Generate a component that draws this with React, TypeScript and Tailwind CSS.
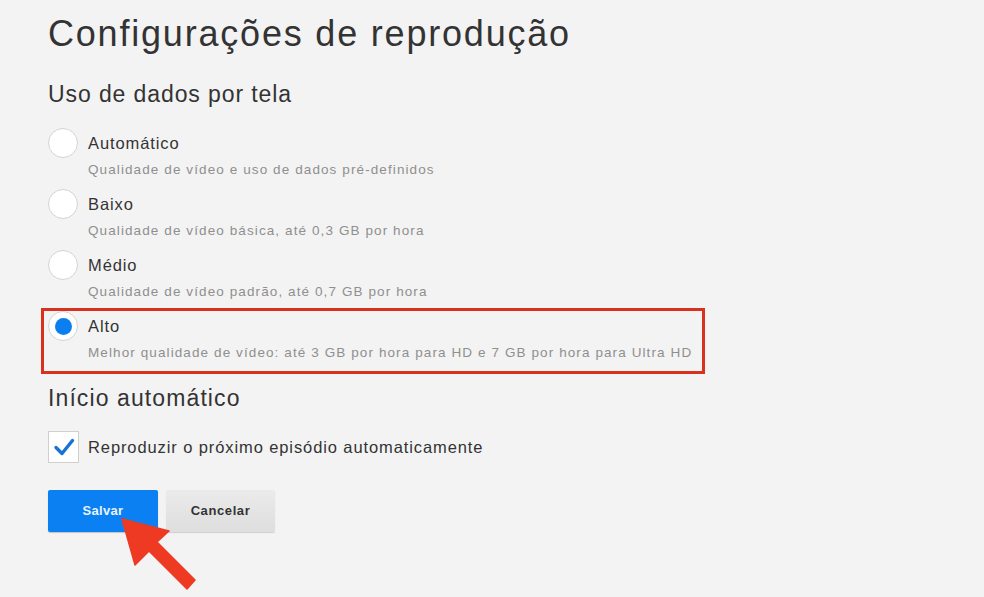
import { useState } from "react";

type Plan = {
  id: string;
  label: string;
  hint: string;
};

const plans: Plan[] = [
  { id: "auto", label: "Automático", hint: "Qualidade de vídeo e uso de dados pré-definidos" },
  { id: "low", label: "Baixo", hint: "Qualidade de vídeo básica, até 0,3 GB por hora" },
  { id: "medium", label: "Médio", hint: "Qualidade de vídeo padrão, até 0,7 GB por hora" },
  {
    id: "high",
    label: "Alto",
    hint: "Melhor qualidade de vídeo: até 3 GB por hora para HD e 7 GB por hora para Ultra HD",
  },
];

function RadioOption({
  plan,
  checked,
  onSelect,
}: {
  plan: Plan;
  checked: boolean;
  onSelect: () => void;
}) {
  return (
    <div className="flex flex-col cursor-pointer" onClick={onSelect}>
      <div className="flex items-center h-[30px]">
        <span className="w-[30px] h-[30px] rounded-full bg-white border border-[#d4d4d4] flex items-center justify-center shrink-0">
          {checked && <span className="w-[17px] h-[17px] rounded-full bg-[#0b7ff0]" />}
        </span>
        <span className="ml-[10px] text-[16.5px] leading-[20px] tracking-[0.9px] text-[#333]">{plan.label}</span>
      </div>
      <div className="mt-[4px] ml-[40px] text-[13.5px] leading-[16px] tracking-[1.1px] text-[#8f8f8f] whitespace-nowrap">
        {plan.hint}
      </div>
    </div>
  );
}

export default function App() {
  const [selected, setSelected] = useState("high");
  const [autoplay, setAutoplay] = useState(true);

  return (
    <div
      className="relative w-[984px] h-[597px] overflow-hidden bg-[#f3f3f3] pl-[48px] pt-[14px]"
      style={{ fontFamily: '"Liberation Sans", Arial, sans-serif' }}
    >
      <h1 className="text-[36px] leading-[40px] tracking-[1.8px] text-[#333] font-normal">
        Configurações de reprodução
      </h1>

      <h2 className="mt-[26px] text-[23px] leading-[28px] tracking-[0.9px] text-[#333] font-normal">
        Uso de dados por tela
      </h2>

      <div className="mt-[20px] flex flex-col gap-[11px]">
        {plans.map((p) =>
          p.id === "high" ? (
            <div
              key={p.id}
              className="-ml-[7px] -mt-[3px] w-[664px] border-[3px] border-[#d8321f] pl-[4px] pb-[10px]"
            >
              <RadioOption plan={p} checked={selected === p.id} onSelect={() => setSelected(p.id)} />
            </div>
          ) : (
            <RadioOption key={p.id} plan={p} checked={selected === p.id} onSelect={() => setSelected(p.id)} />
          )
        )}
      </div>

      <h2 className="mt-[10px] text-[23px] leading-[28px] tracking-[1.1px] text-[#333] font-normal">
        Início automático
      </h2>

      <label className="mt-[19px] flex items-center h-[32px] cursor-pointer" onClick={() => setAutoplay(!autoplay)}>
        <span className="w-[31px] h-[32px] bg-white border border-[#cfcfcf] flex items-center justify-center shrink-0">
          {autoplay && (
            <svg width="22" height="20" viewBox="0 0 22 20">
              <path
                d="M3 10.5 L9 16.5 L19.5 3.5"
                fill="none"
                stroke="#1772d6"
                strokeWidth="3.4"
                strokeLinecap="round"
                strokeLinejoin="round"
              />
            </svg>
          )}
        </span>
        <span className="ml-[9px] text-[16.5px] leading-[20px] tracking-[0.9px] text-[#333]">
          Reproduzir o próximo episódio automaticamente
        </span>
      </label>

      <div className="mt-[27px] flex gap-[8px]">
        <button className="w-[110px] h-[42px] rounded-[2px] bg-[#0a80f2] text-[13px] font-bold tracking-[0.3px] text-[#e8f3ff] shadow-[0_1px_1px_rgba(0,0,0,0.2)]">
          Salvar
        </button>
        <button className="w-[109px] h-[42px] rounded-[2px] bg-gradient-to-b from-[#ebebeb] to-[#dedede] text-[13px] font-bold tracking-[0.6px] text-[#333] shadow-[0_1px_1px_rgba(0,0,0,0.15)]">
          Cancelar
        </button>
      </div>

      {/* pointer arrow over the save button */}
      <svg className="absolute left-0 top-0 pointer-events-none" width="984" height="597">
        <path
          d="M122 519 L169 531 L157 542 L195 580 L187 589 L149 551 L135 565 Z"
          fill="#ee3a22"
          stroke="#ee3a22"
          strokeWidth="1.5"
          strokeLinejoin="round"
        />
      </svg>
    </div>
  );
}
